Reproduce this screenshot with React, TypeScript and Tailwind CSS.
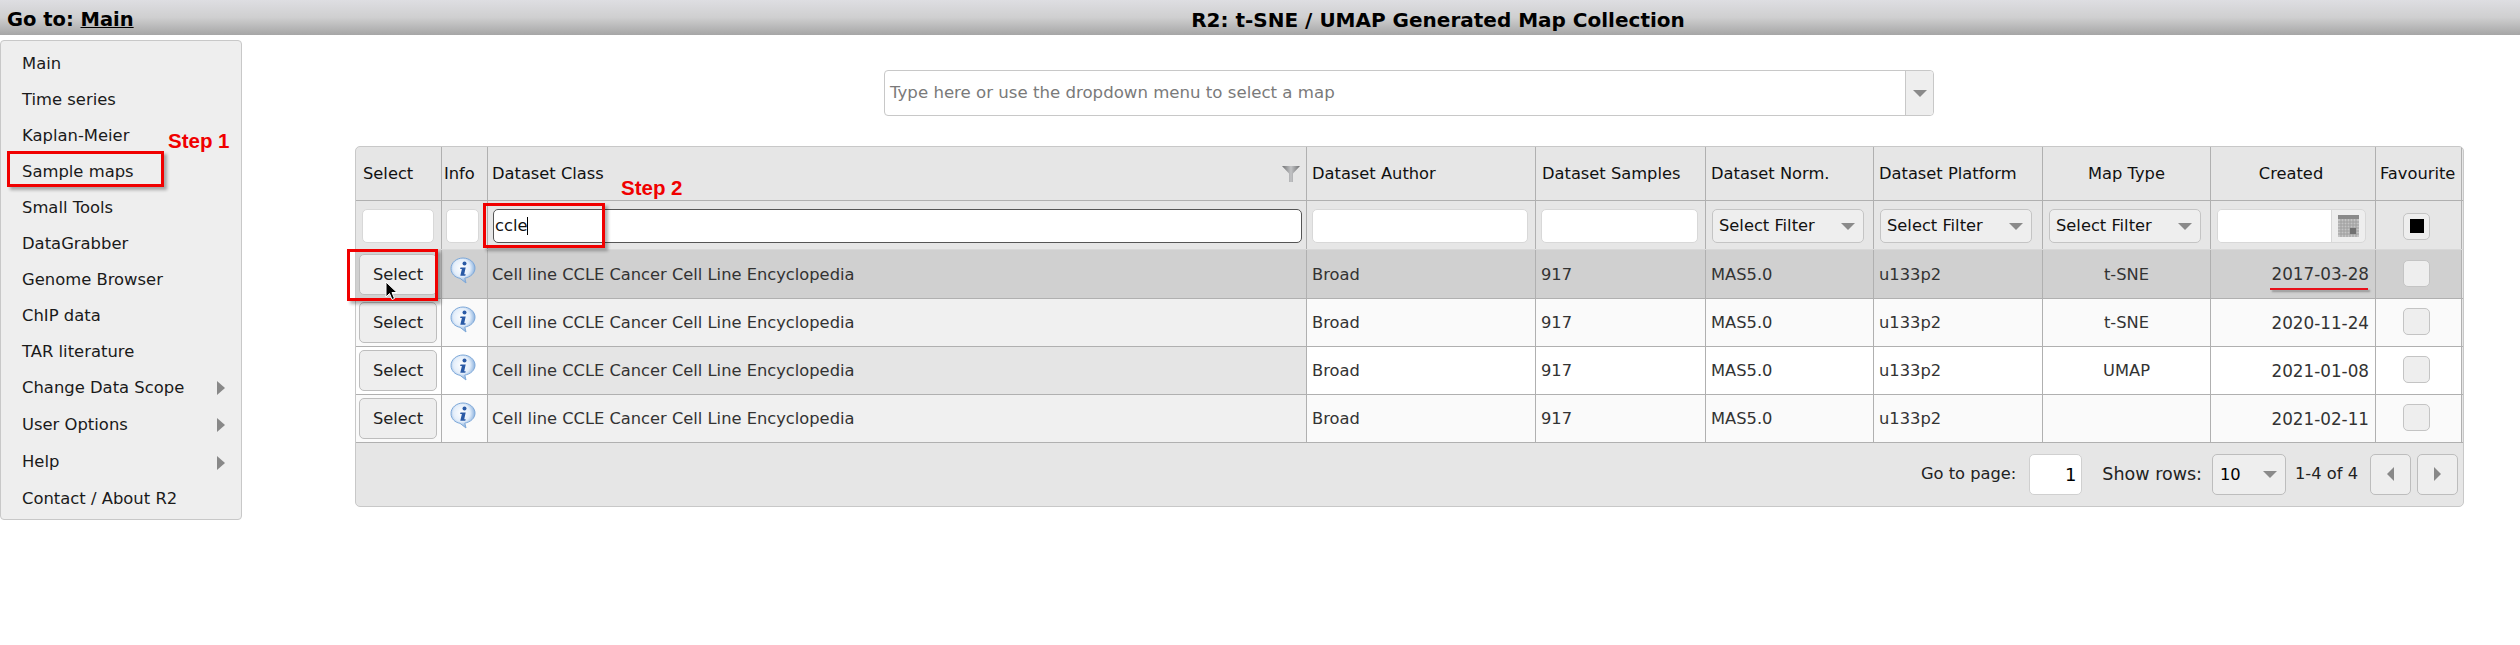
import React from "react";

const GRID = "grid grid-cols-[86px_46px_819px_229px_170px_168px_169px_168px_165px_86px]";
const FONT = "font-['DejaVu_Sans',Verdana,sans-serif]";

function Info() {
  return (
    <svg width="26" height="27" viewBox="0 0 26 27">
      <defs>
        <radialGradient id="ig" cx="45%" cy="40%" r="62%">
          <stop offset="0%" stopColor="#ffffff" />
          <stop offset="55%" stopColor="#e4eefa" />
          <stop offset="100%" stopColor="#6f9fd6" />
        </radialGradient>
      </defs>
      <path d="M13 1C6.500 1 1 5.500 1 11.500c0 5.200 4 9 9 9.800l6 4.700-1.200-4.900c5.600-1 10.200-4.700 10.200-10C25 5.500 19.500 1 13 1z" fill="url(#ig)" stroke="#7ea8d8" strokeWidth="1" />
      <circle cx="14.500" cy="6.500" r="2" fill="#2a5aa6" />
      <path d="M10.500 10.500h5.200l-1.500 6.700h1.500l-.4 1.500h-5l1.600-6.700h-1.800z" fill="#2a5aa6" />
    </svg>
  );
}

function Arrow({ className = "" }: { className?: string }) {
  return <span className={"w-0 h-0 border-x-[7px] border-x-transparent border-t-[7px] border-t-[#8a8a8a] " + className} />;
}

function Sel() {
  return (
    <div className="w-[152px] h-[34px] flex items-center justify-between pl-[6px] pr-[8px] bg-[#eeeeee] border border-[#c4c4c4] rounded-[5px] text-[#111]">
      <span>Select Filter</span>
      <Arrow />
    </div>
  );
}

function FilterInput({ w }: { w: string }) {
  return <div className={`${w} h-[34px] bg-white border border-[#d8d8d8] rounded-[5px]`} />;
}

function Check({ checked = false }: { checked?: boolean }) {
  return (
    <div className="w-[27px] h-[27px] bg-[#eeeeee] border border-[#c4c4c4] rounded-[5px] flex items-center justify-center">
      {checked && <div className="w-[14px] h-[14px] bg-black" />}
    </div>
  );
}

const rows = [
  { type: "t-SNE", date: "2017-03-28", h: "h-[49px]" },
  { type: "t-SNE", date: "2020-11-24", h: "h-[48px]" },
  { type: "UMAP", date: "2021-01-08", h: "h-[48px]" },
  { type: "", date: "2021-02-11", h: "h-[48px]" },
];

const rowBg = ["bg-[#d0d0d0]", "bg-[#f0f0f0]", "bg-[#e5e5e5]", "bg-[#f0f0f0]"];
const rowBgRight = ["bg-[#d0d0d0]", "bg-[#fafafa]", "bg-[#ffffff]", "bg-[#fafafa]"];

const menu = [
  ["Main", "h-[36px]", 0], ["Time series", "h-[36px]", 0], ["Kaplan-Meier", "h-[36px]", 0], ["Sample maps", "h-[36px]", 0],
  ["Small Tools", "h-[36px]", 0], ["DataGrabber", "h-[36px]", 0], ["Genome Browser", "h-[36px]", 0], ["ChIP data", "h-[36px]", 0],
  ["TAR literature", "h-[36px]", 0], ["Change Data Scope", "h-[36px]", 1], ["User Options", "h-[38px]", 1], ["Help", "h-[37px]", 1], ["Contact / About R2", "h-[37px]", 0],
] as const;

function RedBox({ className }: { className: string }) {
  return <div className={"absolute border-[3px] border-[#f00000] shadow-[3px_3px_3px_rgba(0,0,0,0.3)] pointer-events-none " + className} />;
}

const Cell = ({ className = "", children }: { className?: string; children?: React.ReactNode }) => (
  <div className={"flex items-center border-r border-[#b0b0b0] min-w-0 pt-[2px] " + className}>{children}</div>
);

export default function App() {
  return (
    <div className={`relative w-[2520px] h-[645px] bg-white overflow-hidden ${FONT}`}>
      <header className="h-[35px] bg-gradient-to-b from-[#dedee2] via-[#cfcfd0] to-[#a6a6a6] flex items-center">
        <div className="w-[356px] pl-[7px] pt-[4px] text-[19.5px] font-bold text-black">
          Go to: <span className="underline">Main</span>
        </div>
        <div className="flex-1 text-center text-[20px] font-bold text-black pt-[4px]">R2: t-SNE / UMAP Generated Map Collection</div>
      </header>

      <div className="flex items-start">
        <nav className="mt-[5px] w-[242px] h-[480px] bg-[#eeeeee] border border-[#c8c8c8] rounded-[4px] pt-[5px] flex flex-col shrink-0">
          {menu.map(([label, h, sub]) => (
            <div key={label} className={`${h} flex items-center justify-between pl-[21px] pr-[16px] text-[16.4px] text-[#1a1a1a]`}>
              <span>{label}</span>
              {sub ? <span className="w-0 h-0 border-y-[7px] border-y-transparent border-l-[8px] border-l-[#888]" /> : null}
            </div>
          ))}
        </nav>

        <main className="flex-1 min-w-0 flex flex-col pl-[113px]">
          <div className="ml-[529px] mt-[35px] w-[1050px] h-[46px] flex border border-[#c8c8c8] rounded-[4px]">
            <div className="flex-1 flex items-center pl-[5px] text-[16.6px] text-[#7a7a7a]">Type here or use the dropdown menu to select a map</div>
            <div className="w-[28px] bg-[#eeeeee] border-l border-[#c8c8c8] rounded-r-[4px] flex items-center justify-center">
              <Arrow />
            </div>
          </div>

          <section className="mt-[30px] w-[2109px] h-[361px] border border-[#c8c8c8] rounded-[5px] bg-[#e6e6e6] text-[16.3px] overflow-hidden">
            <div className={`${GRID} h-[54px] border-b border-[#b0b0b0] text-[#111]`}>
              <Cell className="pl-[7px]">Select</Cell>
              <Cell className="pl-[2px]">Info</Cell>
              <Cell className="pl-[4px] justify-between pr-[6px]">
                <span>Dataset Class</span>
                <svg width="18" height="16" viewBox="0 0 18 16" className="mb-[2px]">
                  <defs>
                    <linearGradient id="fg" x1="0" y1="0" x2="1" y2="0">
                      <stop offset="0%" stopColor="#6f7072" />
                      <stop offset="50%" stopColor="#c2c3c5" />
                      <stop offset="100%" stopColor="#6f7072" />
                    </linearGradient>
                  </defs>
                  <path d="M0 0h18l-7 7.500V16H7V7.500z" fill="url(#fg)" />
                </svg>
              </Cell>
              <Cell className="pl-[5px]">Dataset Author</Cell>
              <Cell className="pl-[6px]">Dataset Samples</Cell>
              <Cell className="pl-[5px]">Dataset Norm.</Cell>
              <Cell className="pl-[5px]">Dataset Platform</Cell>
              <Cell className="justify-center">Map Type</Cell>
              <Cell className="justify-center pr-[4px]">Created</Cell>
              <Cell className="pl-[4px]">Favourite</Cell>
            </div>

            <div className={`${GRID} h-[49px] border-b border-[#d8d8d8]`}>
              <Cell className="pl-[6px] pr-[7px]"><FilterInput w="w-[72px]" /></Cell>
              <Cell className="pl-[4px]"><FilterInput w="w-[33px]" /></Cell>
              <Cell className="pl-[5px]">
                <div className="w-[809px] h-[34px] bg-white border border-[#555] rounded-[5px] flex items-center pl-[1px] text-[#111]">
                  ccle<span className="w-px h-[18px] bg-black" />
                </div>
              </Cell>
              <Cell className="pl-[5px]"><FilterInput w="w-[216px]" /></Cell>
              <Cell className="pl-[5px]"><FilterInput w="w-[157px]" /></Cell>
              <Cell className="pl-[6px]"><Sel /></Cell>
              <Cell className="pl-[6px]"><Sel /></Cell>
              <Cell className="pl-[6px]"><Sel /></Cell>
              <Cell className="pl-[6px]">
                <div className="w-[149px] h-[34px] flex bg-[#eeeeee] border border-[#d8d8d8] rounded-[5px] overflow-hidden">
                  <div className="w-[114px] bg-white border-r border-[#d8d8d8]" />
                  <div className="flex-1 flex items-center justify-center">
                    <svg width="21" height="22" viewBox="0 0 21 22">
                      <rect width="21" height="22" fill="#c4c4c4" />
                      <rect width="21" height="4" fill="#8a8a8a" />
                      <path d="M0 7h21M0 10h21M0 13h21M0 16h21M0 19h21M3 4v18M6 4v18M9 4v18M12 4v18M15 4v18M18 4v18" stroke="#9e9e9e" strokeWidth="1" />
                      <rect x="12" y="13" width="6" height="6" fill="#707070" />
                    </svg>
                  </div>
                </div>
              </Cell>
              <Cell className="justify-center pr-[4px]"><Check checked /></Cell>
            </div>

            {rows.map((r, i) => (
              <div key={i} className={`${GRID} ${r.h} border-b border-[#b0b0b0] text-[#333]`}>
                <Cell className={`${rowBgRight[i]} pl-[3px] pb-[2px]`}>
                  <div className="w-[78px] h-[41px] bg-[#eeeeee] border border-[#bdbdbd] rounded-[5px] flex items-center justify-center pt-[2px] text-[#222]">Select</div>
                </Cell>
                <Cell className={`${rowBgRight[i]} pl-[8px] pb-[9px]`}><Info /></Cell>
                <Cell className={`${rowBg[i]} pl-[4px]`}>Cell line CCLE Cancer Cell Line Encyclopedia</Cell>
                <Cell className={`${rowBgRight[i]} pl-[5px]`}>Broad</Cell>
                <Cell className={`${rowBgRight[i]} pl-[5px]`}>917</Cell>
                <Cell className={`${rowBgRight[i]} pl-[5px]`}>MAS5.0</Cell>
                <Cell className={`${rowBgRight[i]} pl-[5px]`}>u133p2</Cell>
                <Cell className={`${rowBgRight[i]} justify-center`}>{r.type}</Cell>
                <Cell className={`${rowBgRight[i]} justify-end pr-[6px] text-[16.8px]`}>{r.date}</Cell>
                <Cell className={`${rowBgRight[i]} justify-center pr-[4px] pb-[4px]`}><Check /></Cell>
              </div>
            ))}

            <div className="h-[62px] flex items-center justify-end pr-[5px] text-[#222]">
              <span>Go to page:</span>
              <div className="ml-[13px] w-[53px] h-[41px] bg-white border border-[#d0d0d0] rounded-[5px] flex items-center justify-end pr-[5px] text-[18px] text-black">1</div>
              <span className="ml-[20px] text-[17.500px]">Show rows:</span>
              <div className="ml-[10px] w-[74px] h-[41px] bg-[#eeeeee] border border-[#bdbdbd] rounded-[5px] flex items-center justify-between pl-[7px] pr-[8px] pt-[3px] text-black"><span>10</span><Arrow className="mb-[2px]" /></div>
              <span className="ml-[9px]">1-4 of 4</span>
              <div className="ml-[12px] w-[41px] h-[41px] bg-[#eeeeee] border border-[#bdbdbd] rounded-[5px] flex items-center justify-center">
                <span className="w-0 h-0 border-y-[7px] border-y-transparent border-r-[7px] border-r-[#888]" />
              </div>
              <div className="ml-[6px] w-[41px] h-[41px] bg-[#eeeeee] border border-[#bdbdbd] rounded-[5px] flex items-center justify-center">
                <span className="w-0 h-0 border-y-[7px] border-y-transparent border-l-[7px] border-l-[#888]" />
              </div>
            </div>
          </section>
        </main>
      </div>

      {/* annotations over the page */}
      <RedBox className="left-[7px] top-[151px] w-[157px] h-[36px]" />
      <RedBox className="left-[483px] top-[203px] w-[122px] h-[45px]" />
      <RedBox className="left-[347px] top-[249px] w-[91px] h-[52px]" />
      <div className="absolute left-[168px] top-[126px] text-[20.500px] font-bold text-[#f00000] font-['Liberation_Sans',Arial,sans-serif]">Step 1</div>
      <div className="absolute left-[621px] top-[173px] text-[20.500px] font-bold text-[#f00000] font-['Liberation_Sans',Arial,sans-serif]">Step 2</div>
      <div className="absolute left-[2270px] top-[288px] w-[98px] h-[2px] bg-[#e8101a] shadow-[2px_2px_2px_rgba(0,0,0,0.3)]" />
      <svg className="absolute left-[385px] top-[281px]" width="14" height="20" viewBox="0 0 14 20">
        <path d="M1 1v15l3.500-3.500 2.500 6 2.500-1-2.500-6h5z" fill="#000" stroke="#fff" strokeWidth="1" />
      </svg>
    </div>
  );
}
